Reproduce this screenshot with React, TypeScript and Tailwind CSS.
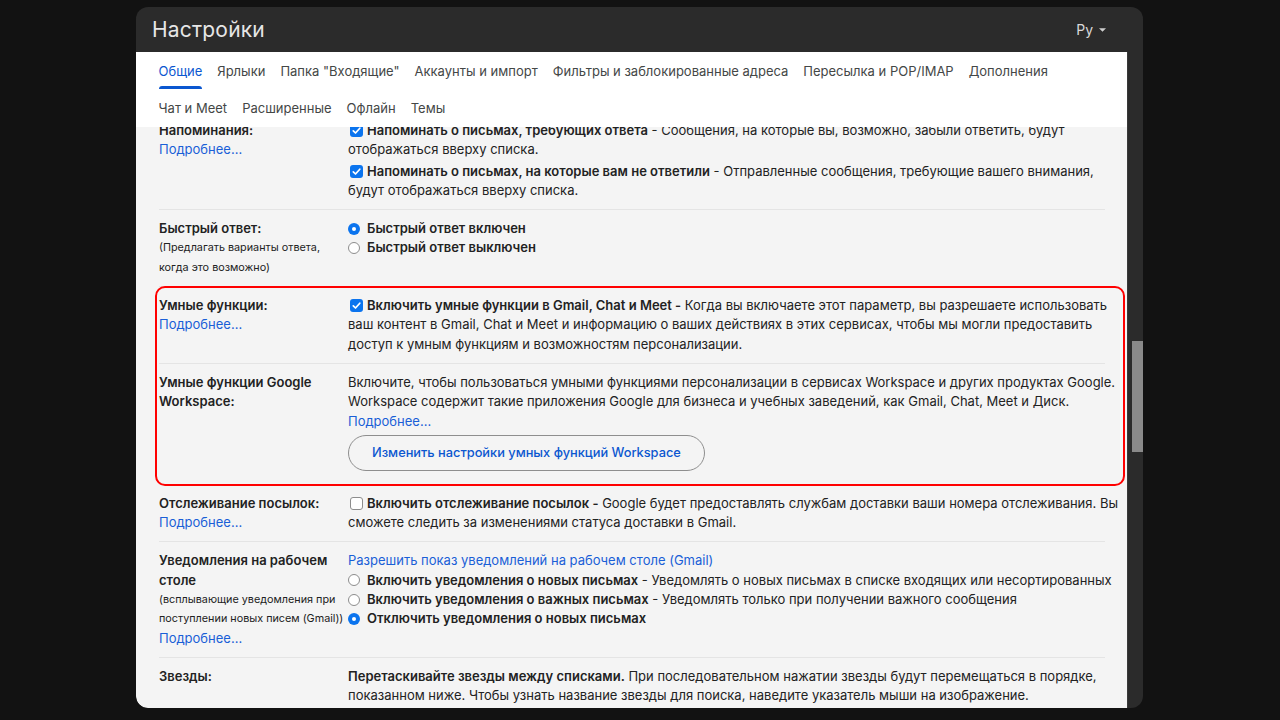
import { ReactNode } from "react";

const tabsRow1 = [
  "Общие",
  "Ярлыки",
  'Папка "Входящие"',
  "Аккаунты и импорт",
  "Фильтры и заблокированные адреса",
  "Пересылка и POP/IMAP",
  "Дополнения",
];
const tabsRow2 = ["Чат и Meet", "Расширенные", "Офлайн", "Темы"];

function Checkbox({ checked }: { checked: boolean }) {
  if (!checked) {
    return (
      <span className="inline-block w-[13px] h-[13px] ml-[2px] mr-[4px] align-[-2px] rounded-[3px] border border-[#8d8d8d] bg-white" />
    );
  }
  return (
    <svg viewBox="0 0 13 13" className="inline-block w-[13px] h-[13px] ml-[2px] mr-[4px] align-[-2px]">
      <rect x="0" y="0" width="13" height="13" rx="3" fill="#0b74ee" />
      <path d="M3.3 6.8 L5.5 9 L9.8 4.2" fill="none" stroke="#fff" strokeWidth="1.7" strokeLinecap="round" strokeLinejoin="round" />
    </svg>
  );
}

function Radio({ checked }: { checked: boolean }) {
  return checked ? (
    <span className="w-[12px] h-[12px] rounded-full bg-[#0b74ee] flex items-center justify-center shrink-0">
      <span className="w-[4px] h-[4px] rounded-full bg-white" />
    </span>
  ) : (
    <span className="w-[12px] h-[12px] rounded-full border border-[#8d8d8d] bg-white shrink-0" />
  );
}

function RadioLine({ checked, children }: { checked: boolean; children: ReactNode }) {
  return (
    <div className="flex items-center gap-[7px]">
      <Radio checked={checked} />
      <span>{children}</span>
    </div>
  );
}

function More() {
  return <div className="text-[#1a5fd7]">Подробнее...</div>;
}

function Row({ label, children, last }: { label: ReactNode; children: ReactNode; last?: boolean }) {
  return (
    <div className={`grid grid-cols-[189px_1fr] pt-[9px] pb-[9px] ${last ? "" : "border-b border-[#e4e4e4]"}`}>
      <div>{label}</div>
      <div className="whitespace-nowrap">{children}</div>
    </div>
  );
}

export default function App() {
  return (
    <div className="w-[1280px] h-[720px] bg-[#121212] pt-[7px] pl-[136px] overflow-hidden" style={{ fontFamily: "Inter, 'Noto Sans', sans-serif" }}>
      <div className="w-[1007px] h-[701px] bg-[#2b2b2b] rounded-[12px] flex flex-col overflow-hidden">
        {/* header */}
        <div className="h-[45px] shrink-0 flex items-center justify-between pl-[16px] pr-[37px]">
          <span className="text-[21px] text-[#e6e6e6] tracking-[0.2px]">Настройки</span>
          <span className="flex items-center gap-[6px] text-[#d9d9d9] text-[14px]">
            Ру
            <svg viewBox="0 0 8 4" className="w-[7px] h-[4px]">
              <path d="M0 0 L8 0 L4 4 Z" fill="#cfcfcf" />
            </svg>
          </span>
        </div>

        <div className="flex flex-1 min-h-0">
          {/* main panel */}
          <div className="w-[991px] flex flex-col bg-[#f4f4f4] rounded-bl-[12px] overflow-hidden">
            <div className="bg-white shrink-0 pl-[15px] text-[13px] text-[#444746]">
              <div className="flex h-[37px]">
                {tabsRow1.map((t, i) => (
                  <div key={t} className="flex flex-col px-[7.5px] pt-[9px]">
                    <span className={`leading-[20px] whitespace-nowrap ${i === 0 ? "text-[#0b57d0]" : ""}`}>{t}</span>
                    <span className={`mt-auto h-[3px] rounded-t-[3px] ${i === 0 ? "bg-[#0b57d0]" : ""}`} />
                  </div>
                ))}
              </div>
              <div className="flex h-[38px] pt-[9px]">
                {tabsRow2.map((t) => (
                  <span key={t} className="px-[7.5px] leading-[20px] whitespace-nowrap">{t}</span>
                ))}
              </div>
            </div>

            <div className="flex-1 overflow-hidden pl-[23px] pr-[22px] text-[13px] leading-[19.3px] text-[#222]">
              <div className="-mt-[15px]">
                <Row
                  label={
                    <>
                      <div className="font-semibold">Напоминания:</div>
                      <More />
                    </>
                  }
                >
                  <div>
                    <Checkbox checked />
                    <b className="font-semibold">Напоминать о письмах, требующих ответа</b> - Сообщения, на которые вы, возможно, забыли ответить, будут
                    <br />
                    отображаться вверху списка.
                  </div>
                  <div className="mt-[2px]">
                    <Checkbox checked />
                    <b className="font-semibold">Напоминать о письмах, на которые вам не ответили</b> - Отправленные сообщения, требующие вашего внимания,
                    <br />
                    будут отображаться вверху списка.
                  </div>
                </Row>

                <Row
                  label={
                    <>
                      <div className="font-semibold">Быстрый ответ:</div>
                      <div className="text-[10.8px]">(Предлагать варианты ответа,</div>
                      <div className="text-[10.8px]">когда это возможно)</div>
                    </>
                  }
                >
                  <RadioLine checked>
                    <b className="font-semibold">Быстрый ответ включен</b>
                  </RadioLine>
                  <RadioLine checked={false}>
                    <b className="font-semibold">Быстрый ответ выключен</b>
                  </RadioLine>
                </Row>

                <div className="relative">
                  <Row
                    label={
                      <>
                        <div className="font-semibold">Умные функции:</div>
                        <More />
                      </>
                    }
                  >
                    <div>
                      <Checkbox checked />
                      <b className="font-semibold">Включить умные функции в Gmail, Chat и Meet -</b> Когда вы включаете этот параметр, вы разрешаете использовать
                      <br />
                      ваш контент в Gmail, Chat и Meet и информацию о ваших действиях в этих сервисах, чтобы мы могли предоставить
                      <br />
                      доступ к умным функциям и возможностям персонализации.
                    </div>
                  </Row>

                  <Row
                    label={
                      <>
                        <div className="font-semibold">Умные функции Google</div>
                        <div className="font-semibold">Workspace:</div>
                      </>
                    }
                  >
                    <div>
                      Включите, чтобы пользоваться умными функциями персонализации в сервисах Workspace и других продуктах Google.
                      <br />
                      Workspace содержит такие приложения Google для бизнеса и учебных заведений, как Gmail, Chat, Meet и Диск.
                    </div>
                    <More />
                    <button className="mt-[4px] mb-[4px] h-[36px] px-[23px] rounded-full border border-[#8e8e8e] text-[#0b57d0] font-medium text-[12.8px]">
                      Изменить настройки умных функций Workspace
                    </button>
                  </Row>

                  <div className="absolute -top-[1px] -bottom-[1px] -left-[4px] -right-[20px] border-2 border-[#ff0000] rounded-[10px] pointer-events-none" />
                </div>

                <Row
                  label={
                    <>
                      <div className="font-semibold">Отслеживание посылок:</div>
                      <More />
                    </>
                  }
                >
                  <div>
                    <Checkbox checked={false} />
                    <b className="font-semibold">Включить отслеживание посылок -</b> Google будет предоставлять службам доставки ваши номера отслеживания. Вы
                    <br />
                    сможете следить за изменениями статуса доставки в Gmail.
                  </div>
                </Row>

                <Row
                  label={
                    <>
                      <div className="font-semibold">Уведомления на рабочем</div>
                      <div className="font-semibold">столе</div>
                      <div className="text-[10.8px] whitespace-nowrap">(всплывающие уведомления при</div>
                      <div className="text-[10.8px] whitespace-nowrap">поступлении новых писем (Gmail))</div>
                      <More />
                    </>
                  }
                >
                  <div className="text-[#1a5fd7]">Разрешить показ уведомлений на рабочем столе (Gmail)</div>
                  <RadioLine checked={false}>
                    <b className="font-semibold">Включить уведомления о новых письмах</b> - Уведомлять о новых письмах в списке входящих или несортированных
                  </RadioLine>
                  <RadioLine checked={false}>
                    <b className="font-semibold">Включить уведомления о важных письмах</b> - Уведомлять только при получении важного сообщения
                  </RadioLine>
                  <RadioLine checked>
                    <b className="font-semibold">Отключить уведомления о новых письмах</b>
                  </RadioLine>
                </Row>

                <Row label={<div className="font-semibold">Звезды:</div>} last>
                  <div>
                    <b className="font-semibold">Перетаскивайте звезды между списками.</b> При последовательном нажатии звезды будут перемещаться в порядке,
                    <br />
                    показанном ниже. Чтобы узнать название звезды для поиска, наведите указатель мыши на изображение.
                  </div>
                </Row>
              </div>
            </div>
          </div>

          {/* scrollbar */}
          <div className="flex-1 flex justify-end border-l border-[#393939]">
            <div className="w-[11px] h-[111px] mt-[289px] bg-[#8a8a8a]" />
          </div>
        </div>
      </div>
    </div>
  );
}
